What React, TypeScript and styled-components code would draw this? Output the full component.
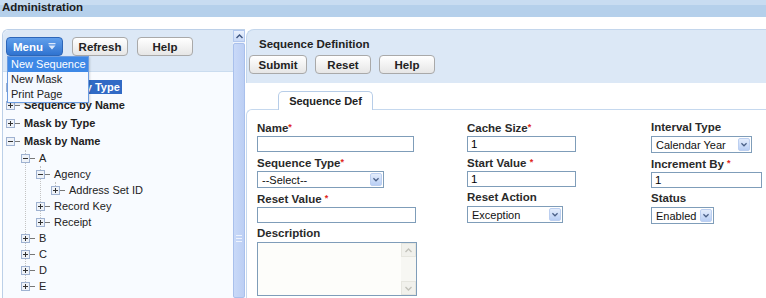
import styled, { createGlobalStyle } from "styled-components"

const GlobalStyle = createGlobalStyle`
  html, body {
    margin: 0;
    padding: 0;
    background: #fff;
  }
  body {
    font-family: "Liberation Sans", Arial, sans-serif;
    font-size: 11px;
    color: #222;
  }
`

const Page = styled.div`
  display: flex;
  flex-direction: column;
  width: 766px;
  height: 298px;
  overflow: hidden;
`
const TitleBar = styled.div`
  height: 17px;
  flex-shrink: 0;
  background: linear-gradient(to bottom, #c8dcf1 0, #c8dcf1 5px, #b5d0eb 5px, #b5d0eb 100%);
  font-weight: bold;
  font-size: 11.5px;
  line-height: 15px;
  padding-left: 2px;
  color: #1c1c1c;
`
const Body = styled.div`
  display: flex;
  flex: 1;
  min-height: 0;
  margin-top: 12px;
  gap: 1px;
`

/* ---------- left panel ---------- */
const LeftPanel = styled.div`
  position: relative;
  display: flex;
  width: 242px;
  margin-left: 2px;
  flex-shrink: 0;
  border-top: 1px solid #bcd0e8;
  border-left: 1px solid #bcd0e8;
  border-top-left-radius: 6px;
  background: #f8fbff;
`
const LeftMain = styled.div`
  flex: 1;
  display: flex;
  flex-direction: column;
  min-width: 0;
`
const PanelHeader = styled.div`
  height: 42px;
  flex-shrink: 0;
  background: #dce8f6;
  border-bottom: 1px solid #cadcef;
  border-top-left-radius: 6px;
  padding: 7px 0 0 3px;
  box-sizing: border-box;
`
const ButtonRow = styled.div<{ gap?: number }>`
  display: flex;
  gap: ${p => p.gap ?? 9}px;
`
const Button = styled.div<{ w: number }>`
  width: ${p => p.w}px;
  height: 19px;
  box-sizing: border-box;
  border: 1px solid #a9a9a9;
  border-radius: 4px;
  background: linear-gradient(to bottom, #ffffff, #e6e6e6);
  font-weight: bold;
  font-size: 11.5px;
  color: #222;
  display: flex;
  align-items: center;
  justify-content: center;
`
const MenuButton = styled(Button)`
  border-color: #2d66b8;
  background: linear-gradient(to bottom, #62a0ec, #2f73d0);
  color: #fff;
  gap: 5px;
`
const Dropdown = styled.div`
  position: absolute;
  left: 4px;
  top: 26px;
  width: 80px;
  border: 1px solid #6c9ce0;
  background: #f5f9ff;
  z-index: 5;
  box-shadow: 1px 1px 2px rgba(0, 0, 0, 0.15);
`
const DropItem = styled.div<{ active?: boolean }>`
  height: 15px;
  line-height: 15px;
  padding-left: 3px;
  font-size: 11px;
  color: ${p => (p.active ? "#fff" : "#222")};
  background: ${p => (p.active ? "#3d88e6" : "transparent")};
  white-space: nowrap;
`
const Tree = styled.div`
  padding: 6px 0 0 3px;
`
const TreeRow = styled.div<{ top?: boolean }>`
  display: flex;
  align-items: center;
  gap: 3px;
  height: ${p => (p.top ? 18 : 16)}px;
  font-size: 11px;
  font-weight: ${p => (p.top ? "bold" : "normal")};
  color: #222;
  white-space: nowrap;
  svg {
    flex-shrink: 0;
    position: relative;
    z-index: 1;
  }
`
const TreeLabel = styled.span<{ selected?: boolean }>`
  padding: 1px 2px;
  margin-left: -2px;
  color: ${p => (p.selected ? "#fff" : "inherit")};
  background: ${p => (p.selected ? "#316ac5" : "transparent")};
`
const TreeGroup = styled.div`
  position: relative;
  padding-left: 15px;
  &::before {
    content: "";
    position: absolute;
    left: 19px;
    top: 0;
    bottom: 8px;
    border-left: 1px dotted #c4c4c4;
  }
`
const ScrollBar = styled.div`
  width: 12px;
  flex-shrink: 0;
  display: flex;
  flex-direction: column;
  background: #eef3fc;
`
const ScrollArrow = styled.div`
  height: 12px;
  box-sizing: border-box;
  border: 1px solid #b3c8ee;
  background: linear-gradient(to bottom, #eaf1fd, #c9d9f7);
  display: flex;
  align-items: center;
  justify-content: center;
`
const ScrollThumb = styled.div`
  flex: 1;
  margin-top: 1px;
  box-sizing: border-box;
  border: 1px solid #a9c0ec;
  border-radius: 2px;
  background: linear-gradient(to right, #c9d9f8, #bccff4);
  display: flex;
  flex-direction: column;
  align-items: center;
`
const Grip = styled.div`
  margin-top: 191px;
  width: 6px;
  height: 5px;
  border-top: 1px solid #eef3fd;
  border-bottom: 1px solid #eef3fd;
  position: relative;
  &::after {
    content: "";
    position: absolute;
    left: 0;
    right: 0;
    top: 2px;
    border-top: 1px solid #eef3fd;
  }
`

/* ---------- right panel ---------- */
const RightPanel = styled.div`
  flex: 1;
  display: flex;
  flex-direction: column;
  min-width: 0;
`
const RightHeader = styled.div`
  height: 54px;
  flex-shrink: 0;
  box-sizing: border-box;
  background: #dce8f6;
  border-top: 1px solid #c3d6ec;
  border-left: 1px solid #c3d6ec;
  border-top-left-radius: 8px;
  padding: 7px 0 0 2px;
`
const PanelTitle = styled.div`
  font-weight: bold;
  font-size: 11.5px;
  line-height: 14px;
  padding-left: 10px;
  margin-bottom: 4px;
  color: #222;
`
const TabStrip = styled.div`
  height: 26px;
  flex-shrink: 0;
  display: flex;
  align-items: flex-end;
  padding-left: 32px;
`
const Tab = styled.div`
  position: relative;
  z-index: 1;
  width: 95px;
  height: 19px;
  margin-bottom: -1px;
  box-sizing: border-box;
  border: 1px solid #b7cde8;
  border-bottom: none;
  border-radius: 5px 5px 0 0;
  background: #fff;
  font-weight: bold;
  font-size: 11px;
  display: flex;
  align-items: center;
  justify-content: center;
`
const TabBody = styled.div`
  flex: 1;
  border-top: 1px solid #c5d8ee;
  border-left: 1px solid #c5d8ee;
  border-top-left-radius: 6px;
`
const FormGrid = styled.div`
  display: grid;
  grid-template-columns: 210px 184px 1fr;
  padding: 11px 0 0 10px;
`
const FieldStack = styled.div`
  display: flex;
  flex-direction: column;
`
const Field = styled.div`
  display: flex;
  flex-direction: column;
  margin-bottom: 4px;
`
const Label = styled.div`
  font-weight: bold;
  font-size: 11.5px;
  line-height: 13px;
  height: 13px;
  margin-bottom: 2px;
  color: #2a2a2a;
  white-space: nowrap;
`
const Req = styled.span`
  color: #e0261c;
  font-size: 9px;
  vertical-align: 2px;
`
const TextBox = styled.div<{ w: number }>`
  width: ${p => p.w}px;
  height: 16px;
  box-sizing: border-box;
  border: 1px solid #7f9db9;
  background: #fff;
  font-size: 11.5px;
  line-height: 14px;
  padding-left: 3px;
  color: #000;
`
const SelectBox = styled.div<{ w: number }>`
  width: ${p => p.w}px;
  height: 17px;
  box-sizing: border-box;
  border: 1px solid #7f9db9;
  background: #fff;
  display: flex;
  align-items: center;
`
const SelectText = styled.div`
  flex: 1;
  padding-left: 4px;
  font-size: 11px;
  color: #111;
  white-space: nowrap;
  overflow: hidden;
`
const SelectArrow = styled.div`
  width: 12px;
  height: 13px;
  margin-right: 1px;
  flex-shrink: 0;
  box-sizing: border-box;
  border: 1px solid #bccff0;
  border-radius: 2px;
  background: linear-gradient(to bottom, #e4edfc, #b9cff5);
  display: flex;
  align-items: center;
  justify-content: center;
`
const TextArea = styled.div`
  width: 160px;
  height: 54px;
  box-sizing: border-box;
  border: 1px solid #7f9db9;
  background: #fdfdfa;
  display: flex;
  justify-content: flex-end;
`
const AreaScroll = styled.div`
  width: 15px;
  display: flex;
  flex-direction: column;
  justify-content: space-between;
  background: #f7f7f3;
`
const AreaArrow = styled.div`
  height: 14px;
  box-sizing: border-box;
  border: 1px solid #e6e6df;
  background: #f1f1ec;
  display: flex;
  align-items: center;
  justify-content: center;
`

const Chevron = ({ up, color, w = 7 }: { up?: boolean; color: string; w?: number }) => (
  <svg width={w} height="5" viewBox="0 0 7 5">
    <polyline
      points={up ? "0.5,4 3.5,1 6.5,4" : "0.5,1 3.5,4 6.5,1"}
      fill="none"
      stroke={color}
      strokeWidth="1.4"
    />
  </svg>
)

const MenuIcon = () => (
  <svg width="8" height="7" viewBox="0 0 8 7">
    <rect x="0.5" y="0" width="7" height="1.3" fill="#dbe8fb" />
    <polygon points="0.5,2.6 7.5,2.6 4,6.5" fill="#dbe8fb" />
  </svg>
)

const Expander = ({ open }: { open?: boolean }) => (
  <svg width="15" height="9" viewBox="0 0 15 9">
    <rect x="0.5" y="0.5" width="8" height="8" fill="#eef2f8" stroke="#9fb2d1" />
    <line x1="2" y1="4.5" x2="7" y2="4.5" stroke="#333" />
    {!open && <line x1="4.5" y1="2" x2="4.5" y2="7" stroke="#333" />}
    <line x1="9" y1="4.5" x2="14" y2="4.5" stroke="#777" />
  </svg>
)

type Node = {
  label: string
  open?: boolean
  selected?: boolean
  children?: Node[]
}

const tree: Node[] = [
  { label: "Sequence by Type", selected: true },
  { label: "Sequence by Name" },
  { label: "Mask by Type" },
  {
    label: "Mask by Name",
    open: true,
    children: [
      {
        label: "A",
        open: true,
        children: [
          { label: "Agency", open: true, children: [{ label: "Address Set ID" }] },
          { label: "Record Key" },
          { label: "Receipt" },
        ],
      },
      { label: "B" },
      { label: "C" },
      { label: "D" },
      { label: "E" },
    ],
  },
]

function TreeNodes({ nodes, top }: { nodes: Node[]; top?: boolean }) {
  return (
    <>
      {nodes.map(node => (
        <div key={node.label}>
          <TreeRow top={top}>
            <Expander open={node.open} />
            <TreeLabel selected={node.selected}>{node.label}</TreeLabel>
          </TreeRow>
          {node.children && (
            <TreeGroup>
              <TreeNodes nodes={node.children} />
            </TreeGroup>
          )}
        </div>
      ))}
    </>
  )
}

function Select({ w, value }: { w: number; value: string }) {
  return (
    <SelectBox w={w}>
      <SelectText>{value}</SelectText>
      <SelectArrow>
        <Chevron color="#4a5f86" w={6} />
      </SelectArrow>
    </SelectBox>
  )
}

export default function App() {
  return (
    <Page>
      <GlobalStyle />
      <TitleBar>Administration</TitleBar>
      <Body>
        <LeftPanel>
          <LeftMain>
            <PanelHeader>
              <ButtonRow>
                <MenuButton w={57}>
                  Menu <MenuIcon />
                </MenuButton>
                <Button w={56}>Refresh</Button>
                <Button w={56}>Help</Button>
              </ButtonRow>
            </PanelHeader>
            <Tree>
              <TreeNodes nodes={tree} top />
            </Tree>
          </LeftMain>
          <ScrollBar>
            <ScrollArrow>
              <Chevron up color="#3d5580" />
            </ScrollArrow>
            <ScrollThumb>
              <Grip />
            </ScrollThumb>
          </ScrollBar>
          <Dropdown>
            <DropItem active>New Sequence</DropItem>
            <DropItem>New Mask</DropItem>
            <DropItem>Print Page</DropItem>
          </Dropdown>
        </LeftPanel>

        <RightPanel>
          <RightHeader>
            <PanelTitle>Sequence Definition</PanelTitle>
            <ButtonRow gap={8}>
              <Button w={58}>Submit</Button>
              <Button w={56}>Reset</Button>
              <Button w={56}>Help</Button>
            </ButtonRow>
          </RightHeader>
          <TabStrip>
            <Tab>Sequence Def</Tab>
          </TabStrip>
          <TabBody>
            <FormGrid>
              <FieldStack>
                <Field>
                  <Label>Name<Req>*</Req></Label>
                  <TextBox w={157} />
                </Field>
                <Field>
                  <Label>Sequence Type<Req>*</Req></Label>
                  <Select w={127} value="--Select--" />
                </Field>
                <Field>
                  <Label>Reset Value <Req>*</Req></Label>
                  <TextBox w={159} />
                </Field>
                <Field>
                  <Label>Description</Label>
                  <TextArea>
                    <AreaScroll>
                      <AreaArrow>
                        <Chevron up color="#c2c2ba" />
                      </AreaArrow>
                      <AreaArrow>
                        <Chevron color="#c2c2ba" />
                      </AreaArrow>
                    </AreaScroll>
                  </TextArea>
                </Field>
              </FieldStack>
              <FieldStack>
                <Field>
                  <Label>Cache Size<Req>*</Req></Label>
                  <TextBox w={109}>1</TextBox>
                </Field>
                <Field>
                  <Label>Start Value <Req>*</Req></Label>
                  <TextBox w={109}>1</TextBox>
                </Field>
                <Field>
                  <Label>Reset Action</Label>
                  <Select w={96} value="Exception" />
                </Field>
              </FieldStack>
              <FieldStack>
                <Field>
                  <Label>Interval Type</Label>
                  <Select w={101} value="Calendar Year" />
                </Field>
                <Field>
                  <Label>Increment By <Req>*</Req></Label>
                  <TextBox w={111}>1</TextBox>
                </Field>
                <Field>
                  <Label>Status</Label>
                  <Select w={63} value="Enabled" />
                </Field>
              </FieldStack>
            </FormGrid>
          </TabBody>
        </RightPanel>
      </Body>
    </Page>
  )
}
